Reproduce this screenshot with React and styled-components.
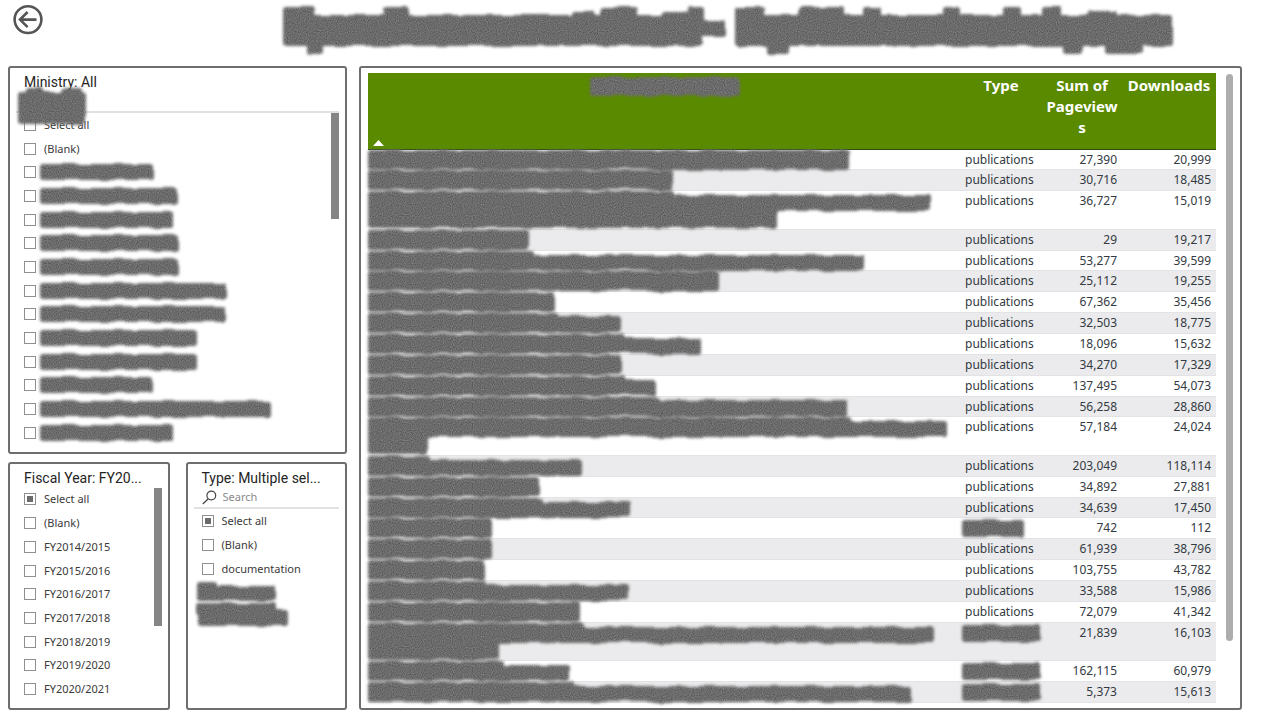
import { useEffect, useRef } from 'react'
import styled, { createGlobalStyle } from 'styled-components'

const GlobalStyle = createGlobalStyle`
  *, *::before, *::after {
    box-sizing: border-box;
  }
  body {
    margin: 0;
    background: #fff;
    color: #252423;
    font-family: "Noto Sans", "Open Sans", sans-serif;
  }
`

const Page = styled.div`
  display: flex;
  flex-direction: column;
  min-height: 100vh;
  padding: 0 38px 10px 8px;
`

const Header = styled.header`
  display: flex;
  align-items: flex-start;
  height: 66px;
  padding: 4px 5px;
`

const BackButton = styled.button`
  width: 30px;
  height: 30px;
  padding: 0;
  border: 0;
  background: none;
  cursor: pointer;

  svg {
    display: block;
  }
`

const PageTitle = styled.h1`
  flex: 1;
  margin: 3px 64px 0 240px;
`

const Board = styled.main`
  flex: 1;
  display: grid;
  grid-template-columns: 339px minmax(0, 1fr);
  column-gap: 12px;
`

const Filters = styled.div`
  display: flex;
  flex-direction: column;
  gap: 8px;
`

const FilterPair = styled.div`
  flex: 2 0 0;
  display: grid;
  grid-template-columns: 1fr 1fr;
  column-gap: 16px;
`

const Panel = styled.section`
  display: flex;
  flex-direction: column;
  min-width: 0;
  border: 2px solid #6e6e6e;
  border-radius: 3px;
`

const FilterPanel = styled(Panel)`
  flex: ${(p) => p.$grow || 1} 0 0;
  padding: 4px 6px 7px;
`

const FilterTitle = styled.h2`
  margin: 0;
  padding-left: 8px;
  font: 400 14px/20px Roboto, sans-serif;
  color: #252423;
  white-space: nowrap;
`

const SearchRow = styled.label`
  position: relative;
  display: flex;
  align-items: center;
  gap: 6px;
  height: 21px;
  padding-left: 8px;
  border-bottom: 2px solid #e1e1e4;
`

const SearchInput = styled.input`
  flex: 1;
  min-width: 0;
  padding: 0;
  border: 0;
  outline: 0;
  background: none;
  font: 11px/16px "Noto Sans", sans-serif;
  color: #333;

  &::placeholder {
    color: #8a8a8a;
    opacity: 1;
  }
`

const SearchCover = styled.div`
  position: absolute;
  left: 2px;
  top: -5px;
  z-index: 1;
`

const ListArea = styled.div`
  flex: 1;
  display: flex;
`

const List = styled.ul`
  flex: 1;
  display: grid;
  grid-template-rows: repeat(${(p) => p.$rows}, minmax(0, 1fr));
  margin: 0;
  padding: 0 0 0 8px;
  list-style: none;
`

const Item = styled.li`
  display: flex;
  align-items: center;
`

const ItemLabel = styled.label`
  display: flex;
  align-items: center;
  gap: 8px;
  font-size: 11px;
  line-height: 16px;
  color: #3b3a39;
`

const Box = styled.input`
  appearance: none;
  display: grid;
  place-items: center;
  width: 12px;
  height: 12px;
  margin: 0;
  border: 1px solid #8f8f8f;
  background: #fff;

  &:indeterminate::before {
    content: "";
    width: 6px;
    height: 6px;
    background: #6b6b6b;
  }
`

const ListScroll = styled.div`
  width: 8px;
  height: ${(p) => p.$size};
  background: #858585;
`

const TablePanel = styled(Panel)`
  flex-direction: row;
  gap: 10px;
  padding: 5px 7px;
`

const TableScroll = styled.div`
  width: 7px;
  height: 90%;
  margin-top: 1px;
  border-radius: 4px;
  background: #adadad;
`

const TableWrap = styled.div`
  flex: 1;
  min-width: 0;
`

const Table = styled.table`
  width: 100%;
  height: 100%;
  table-layout: fixed;
  border-collapse: collapse;
`

const Col = styled.col`
  width: ${(p) => p.$width};
`

const HeadCell = styled.th`
  position: relative;
  height: 76px;
  padding: 2px 4px;
  border-bottom: 1px solid #2f4a10;
  background: #5a8a00;
  color: #fff;
  font-size: 15px;
  font-weight: 700;
  line-height: 21px;
  vertical-align: top;
  text-align: center;
  overflow-wrap: anywhere;
`

const HeadSmudge = styled.div`
  display: flex;
  justify-content: center;
  padding-top: 2px;
`

const SortMark = styled.svg`
  position: absolute;
  left: 5px;
  bottom: 3px;
`

const Row = styled.tr`
  border-bottom: 1px solid #e3e3e5;

  &:nth-child(even) {
    background: #ebebed;
  }
`

const Cell = styled.td`
  padding: 1px 5px 0;
  font-size: 12px;
  line-height: 18px;
  color: #333a42;
  vertical-align: top;
  text-align: ${(p) => p.$align || 'left'};
`

const NameCell = styled(Cell)`
  padding: 0;
`

const SmudgeSvg = styled.svg`
  display: block;
  overflow: visible;
`

// each part is [x, y, width, height]
const Smudge = ({ width, height, parts }) => (
  <SmudgeSvg width={width} height={height} aria-hidden="true">
    <g filter="url(#grain)">
      {parts.map(([x, y, w, h], i) => (
        <rect key={i} x={x} y={y} width={w} height={h} rx="3" />
      ))}
    </g>
  </SmudgeSvg>
)

const GrainFilter = () => (
  <svg width="0" height="0" style={{ position: 'absolute' }} aria-hidden="true">
    <filter id="grain" filterUnits="userSpaceOnUse" x="-8" y="-8" width="920" height="70" colorInterpolationFilters="sRGB">
      <feTurbulence type="fractalNoise" baseFrequency="0.06 0.03" numOctaves="1" seed="4" result="wave" />
      <feDisplacementMap in="SourceGraphic" in2="wave" scale="6" xChannelSelector="A" yChannelSelector="G" result="shape" />
      <feGaussianBlur in="shape" stdDeviation="1.4" result="soft" />
      <feTurbulence type="fractalNoise" baseFrequency="0.9" numOctaves="1" seed="9" />
      <feColorMatrix values="0.3 0 0 0 0.27  0.3 0 0 0 0.27  0.3 0 0 0 0.27  0 0 0 0 1" />
      <feComposite in2="soft" operator="in" />
    </filter>
  </svg>
)

const CheckItem = ({ text, mixed, smudge }) => {
  const box = useRef(null)
  useEffect(() => {
    box.current.indeterminate = !!mixed
  }, [mixed])
  return (
    <Item>
      <ItemLabel>
        <Box type="checkbox" ref={box} aria-label={smudge ? 'Ministry' : undefined} />
        {smudge ? <Smudge width={smudge} height={16} parts={[[-4, 0, smudge, 16]]} /> : text}
      </ItemLabel>
    </Item>
  )
}

const ministries = [112, 137, 133, 138, 138, 186, 185, 156, 156, 111, 231, 133]

const years = ['FY2014/2015', 'FY2015/2016', 'FY2016/2017', 'FY2017/2018', 'FY2018/2019', 'FY2019/2020', 'FY2020/2021']

const TOP = (w) => [0, 0, w, 20]
const LOW = (w) => [0, 4, w, 16]

const rows = [
  { name: [TOP(482)], views: '27,390', downloads: '20,999' },
  { name: [TOP(304)], views: '30,716', downloads: '18,485' },
  { name: [TOP(305), LOW(562), [0, 17, 409, 20]], tall: true, views: '36,727', downloads: '15,019' },
  { name: [TOP(160)], views: '29', downloads: '19,217' },
  { name: [TOP(166), LOW(496)], views: '53,277', downloads: '39,599' },
  { name: [TOP(351)], views: '25,112', downloads: '19,255' },
  { name: [TOP(186)], views: '67,362', downloads: '35,456' },
  { name: [TOP(190), [0, 3, 252, 17]], views: '32,503', downloads: '18,775' },
  { name: [TOP(256), LOW(333)], views: '18,096', downloads: '15,632' },
  { name: [TOP(253)], views: '34,270', downloads: '17,329' },
  { name: [TOP(257), LOW(289)], views: '137,495', downloads: '54,073' },
  { name: [TOP(293), [0, 3, 480, 17]], views: '56,258', downloads: '28,860' },
  { name: [TOP(483), LOW(579), [0, 17, 60, 20]], tall: true, views: '57,184', downloads: '24,024' },
  { name: [TOP(62), LOW(214)], views: '203,049', downloads: '118,114' },
  { name: [TOP(172)], views: '34,892', downloads: '27,881' },
  { name: [TOP(176), LOW(263)], views: '34,639', downloads: '17,450' },
  { name: [TOP(124)], hidden: 62, views: '742', downloads: '112' },
  { name: [TOP(124)], views: '61,939', downloads: '38,796' },
  { name: [TOP(116)], views: '103,755', downloads: '43,782' },
  { name: [TOP(118), LOW(261)], views: '33,588', downloads: '15,986' },
  { name: [TOP(212)], views: '72,079', downloads: '41,342' },
  { name: [TOP(216), LOW(566), [0, 17, 131, 20]], tall: true, hidden: 78, views: '21,839', downloads: '16,103' },
  { name: [TOP(136), LOW(202)], hidden: 78, views: '162,115', downloads: '60,979' },
  { name: [TOP(206), LOW(543)], hidden: 78, views: '5,373', downloads: '15,613' },
]

const titleParts = [
  [0, 8, 420, 31],
  [0, 0, 32, 38],
  [24, 34, 16, 13],
  [100, 0, 26, 16],
  [290, 4, 20, 14],
  [318, 0, 36, 38],
  [378, 5, 26, 14],
  [404, 0, 18, 20],
  [416, 14, 26, 16],
  [452, 0, 30, 38],
  [454, 8, 435, 31],
  [484, 32, 22, 15],
  [516, 0, 44, 20],
  [580, 0, 18, 20],
  [660, 0, 18, 20],
  [720, 0, 18, 20],
  [760, 0, 18, 20],
  [780, 32, 20, 15],
  [804, 4, 30, 14],
  [822, 32, 38, 15],
]

const App = () => (
  <Page>
    <GlobalStyle />
    <GrainFilter />
    <Header>
      <BackButton type="button" aria-label="Back">
        <svg width="30" height="32" viewBox="0 0 30 32" fill="none" stroke="#555" strokeWidth="2.6">
          <circle cx="15" cy="15.6" r="13.4" />
          <path d="M23.5 15.6H7M14.6 8l-7.6 7.6 7.6 7.6" />
        </svg>
      </BackButton>
      <PageTitle>
        <Smudge width="100%" height={47} parts={titleParts} />
      </PageTitle>
    </Header>
    <Board>
      <Filters>
        <FilterPanel $grow={3}>
          <FilterTitle>Ministry: All</FilterTitle>
          <SearchRow>
            <SearchInput type="text" aria-label="Search ministries" />
            <SearchCover>
              <Smudge width={67} height={37} parts={[[0, 5, 67, 32], [7, 1, 18, 12], [44, 1, 20, 12]]} />
            </SearchCover>
          </SearchRow>
          <ListArea>
            <List $rows={14}>
              <CheckItem text="Select all" />
              <CheckItem text="(Blank)" />
              {ministries.map((w, i) => (
                <CheckItem key={i} smudge={w} />
              ))}
            </List>
            <ListScroll $size="32%" />
          </ListArea>
        </FilterPanel>
        <FilterPair>
          <FilterPanel>
            <FilterTitle>Fiscal Year: FY20...</FilterTitle>
            <ListArea>
              <List $rows={9}>
                <CheckItem text="Select all" mixed />
                <CheckItem text="(Blank)" />
                {years.map((year) => (
                  <CheckItem key={year} text={year} />
                ))}
              </List>
              <ListScroll $size="65%" />
            </ListArea>
          </FilterPanel>
          <FilterPanel>
            <FilterTitle>Type: Multiple sel...</FilterTitle>
            <SearchRow>
              <svg width="15" height="15" viewBox="0 0 15 15" fill="none" stroke="#444" strokeWidth="1.2">
                <circle cx="9.3" cy="5.5" r="4.4" />
                <path d="M6.2 8.7L.8 14" />
              </svg>
              <SearchInput type="text" placeholder="Search" aria-label="Search types" />
            </SearchRow>
            <ListArea>
              <List $rows={8}>
                <CheckItem text="Select all" mixed />
                <CheckItem text="(Blank)" />
                <CheckItem text="documentation" />
                <Item>
                  <Smudge width={80} height={20} parts={[[-5, -1, 20, 19], [-5, 3, 78, 15]]} />
                </Item>
                <Item>
                  <Smudge width={94} height={22} parts={[[-6, -3, 80, 12], [-4, 4, 90, 16]]} />
                </Item>
              </List>
            </ListArea>
          </FilterPanel>
        </FilterPair>
      </Filters>
      <TablePanel>
        <TableWrap>
          <Table>
            <colgroup>
              <Col />
              <Col $width="82px" />
              <Col $width="80px" />
              <Col $width="94px" />
            </colgroup>
            <thead>
              <tr>
                <HeadCell aria-label="Name" aria-sort="ascending">
                  <HeadSmudge>
                    <Smudge width={149} height={19} parts={[[0, 0, 149, 19]]} />
                  </HeadSmudge>
                  <SortMark width="11" height="6" viewBox="0 0 11 6">
                    <path d="M0 6L5.5 0 11 6z" fill="#fff" />
                  </SortMark>
                </HeadCell>
                <HeadCell>Type</HeadCell>
                <HeadCell>Sum of Pageviews</HeadCell>
                <HeadCell>Downloads</HeadCell>
              </tr>
            </thead>
            <tbody>
              {rows.map((row, i) => (
                <Row key={i}>
                  <NameCell>
                    <Smudge width="100%" height={row.tall ? 36 : 18} parts={row.name} />
                  </NameCell>
                  <Cell>
                    {row.hidden ? (
                      <Smudge width={row.hidden} height={18} parts={[[-3, 1, row.hidden, 17]]} />
                    ) : (
                      'publications'
                    )}
                  </Cell>
                  <Cell $align="right">{row.views}</Cell>
                  <Cell $align="right">{row.downloads}</Cell>
                </Row>
              ))}
            </tbody>
          </Table>
        </TableWrap>
        <TableScroll />
      </TablePanel>
    </Board>
  </Page>
)

export default App
